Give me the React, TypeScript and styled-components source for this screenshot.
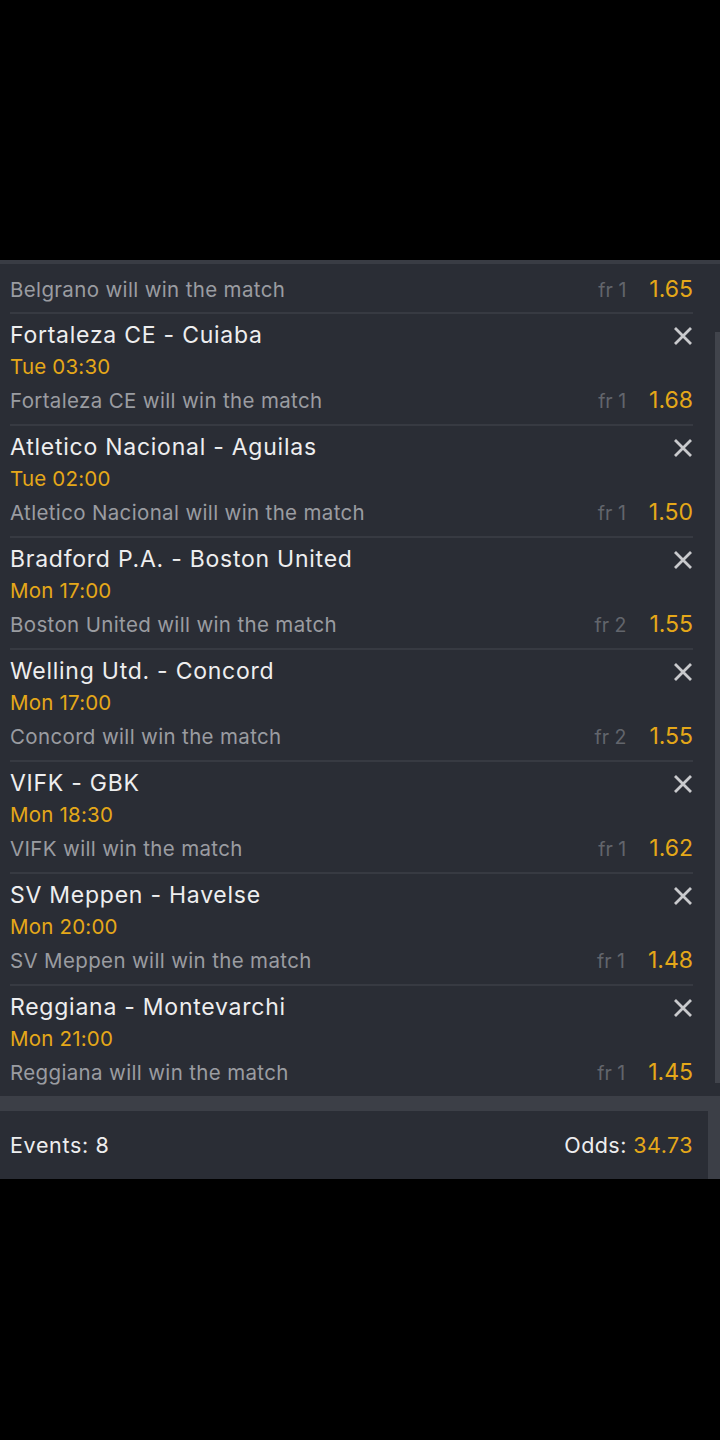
import React from "react";
import styled, { createGlobalStyle } from "styled-components";

const Global = createGlobalStyle`
  html, body { margin: 0; padding: 0; background: #000; }
  body { font-family: Inter, "Open Sans", sans-serif; -webkit-font-smoothing: antialiased; }
`;

const Page = styled.div`
  width: 720px;
  height: 1440px;
  background: #000;
  display: flex;
  flex-direction: column;
`;

const TopSpace = styled.div`
  height: 260px;
  flex: none;
`;

const Panel = styled.div`
  border-top: 4px solid #393c44;
  background: #2a2d35;
  flex: none;
`;

const ScrollArea = styled.div`
  position: relative;
`;

const Thumb = styled.div`
  position: absolute;
  right: 0;
  top: 68px;
  width: 5px;
  height: 751px;
  background: #41444c;
`;

const List = styled.div`
  display: flex;
  flex-direction: column;
`;

const PartialRow = styled.div`
  padding: 10px 27px 8px 10px;
`;

const Row = styled.div`
  padding: 0 27px 9px 10px;
  &::before {
    content: "";
    display: block;
    height: 2px;
    background: #373a42;
    margin-bottom: 6px;
  }
`;

const TitleLine = styled.div`
  display: flex;
  align-items: center;
  justify-content: space-between;
  height: 30px;
`;

const Title = styled.span`
  color: #eeeeef;
  font-size: 23px;
  letter-spacing: 0.75px;
`;

const DateLine = styled.div`
  color: #e5a819;
  font-size: 20.5px;
  letter-spacing: 0.2px;
  line-height: 33px;
  height: 33px;
`;

const SelLine = styled.div<{ $top?: number }>`
  display: flex;
  align-items: center;
  justify-content: space-between;
  height: 30px;
  margin-top: ${(p) => p.$top ?? 0}px;
`;

const Selection = styled.span`
  color: #9a9ca1;
  font-size: 20.5px;
  letter-spacing: 0.35px;
`;

const OddsGroup = styled.span`
  display: flex;
  align-items: baseline;
  gap: 23px;
`;

const Frac = styled.span`
  color: #62656c;
  font-size: 19.5px;
`;

const Odd = styled.span`
  color: #e5a819;
  font-size: 23px;
`;

const CloseBtn = styled.span`
  display: flex;
  width: 20px;
  height: 20px;
  margin-top: 2px;
  color: #c9cacd;
`;

const Band = styled.div`
  height: 15px;
  background: #3c3f47;
`;

const FooterWrap = styled.div`
  background: #3c3f47;
  padding-right: 12px;
`;

const Footer = styled.div`
  height: 68px;
  background: #2a2d35;
  display: flex;
  align-items: center;
  justify-content: space-between;
  padding: 0 15px 0 10px;
`;

const FooterText = styled.span<{ $ls?: number }>`
  color: #eeeeef;
  font-size: 21.5px;
  letter-spacing: ${(p) => p.$ls ?? 0.65}px;
`;

const Yellow = styled.span`
  color: #e5a819;
`;

const XIcon = () => (
  <svg width="20" height="20" viewBox="0 0 20 20">
    <path d="M2 2 L18 18 M18 2 L2 18" stroke="currentColor" strokeWidth="2.8" />
  </svg>
);

type Bet = { match: string; date: string; sel: string; fr: string; odd: string };

const bets: Bet[] = [
  { match: "Fortaleza CE - Cuiaba", date: "Tue 03:30", sel: "Fortaleza CE will win the match", fr: "fr 1", odd: "1.68" },
  { match: "Atletico Nacional - Aguilas", date: "Tue 02:00", sel: "Atletico Nacional will win the match", fr: "fr 1", odd: "1.50" },
  { match: "Bradford P.A. - Boston United", date: "Mon 17:00", sel: "Boston United will win the match", fr: "fr 2", odd: "1.55" },
  { match: "Welling Utd. - Concord", date: "Mon 17:00", sel: "Concord will win the match", fr: "fr 2", odd: "1.55" },
  { match: "VIFK - GBK", date: "Mon 18:30", sel: "VIFK will win the match", fr: "fr 1", odd: "1.62" },
  { match: "SV Meppen - Havelse", date: "Mon 20:00", sel: "SV Meppen will win the match", fr: "fr 1", odd: "1.48" },
  { match: "Reggiana - Montevarchi", date: "Mon 21:00", sel: "Reggiana will win the match", fr: "fr 1", odd: "1.45" },
];

export default function App() {
  return (
    <Page>
      <Global />
      <TopSpace />
      <Panel>
        <ScrollArea>
          <List>
            <PartialRow>
              <SelLine>
                <Selection>Belgrano will win the match</Selection>
                <OddsGroup>
                  <Frac>fr 1</Frac>
                  <Odd>1.65</Odd>
                </OddsGroup>
              </SelLine>
            </PartialRow>
            {bets.map((b) => (
              <Row key={b.match}>
                <TitleLine>
                  <Title>{b.match}</Title>
                  <CloseBtn>
                    <XIcon />
                  </CloseBtn>
                </TitleLine>
                <DateLine>{b.date}</DateLine>
                <SelLine $top={2}>
                  <Selection>{b.sel}</Selection>
                  <OddsGroup>
                    <Frac>{b.fr}</Frac>
                    <Odd>{b.odd}</Odd>
                  </OddsGroup>
                </SelLine>
              </Row>
            ))}
          </List>
          <Thumb />
        </ScrollArea>
        <Band />
        <FooterWrap>
          <Footer>
            <FooterText>Events: 8</FooterText>
            <FooterText $ls={0.45}>
              Odds: <Yellow>34.73</Yellow>
            </FooterText>
          </Footer>
        </FooterWrap>
      </Panel>
    </Page>
  );
}
